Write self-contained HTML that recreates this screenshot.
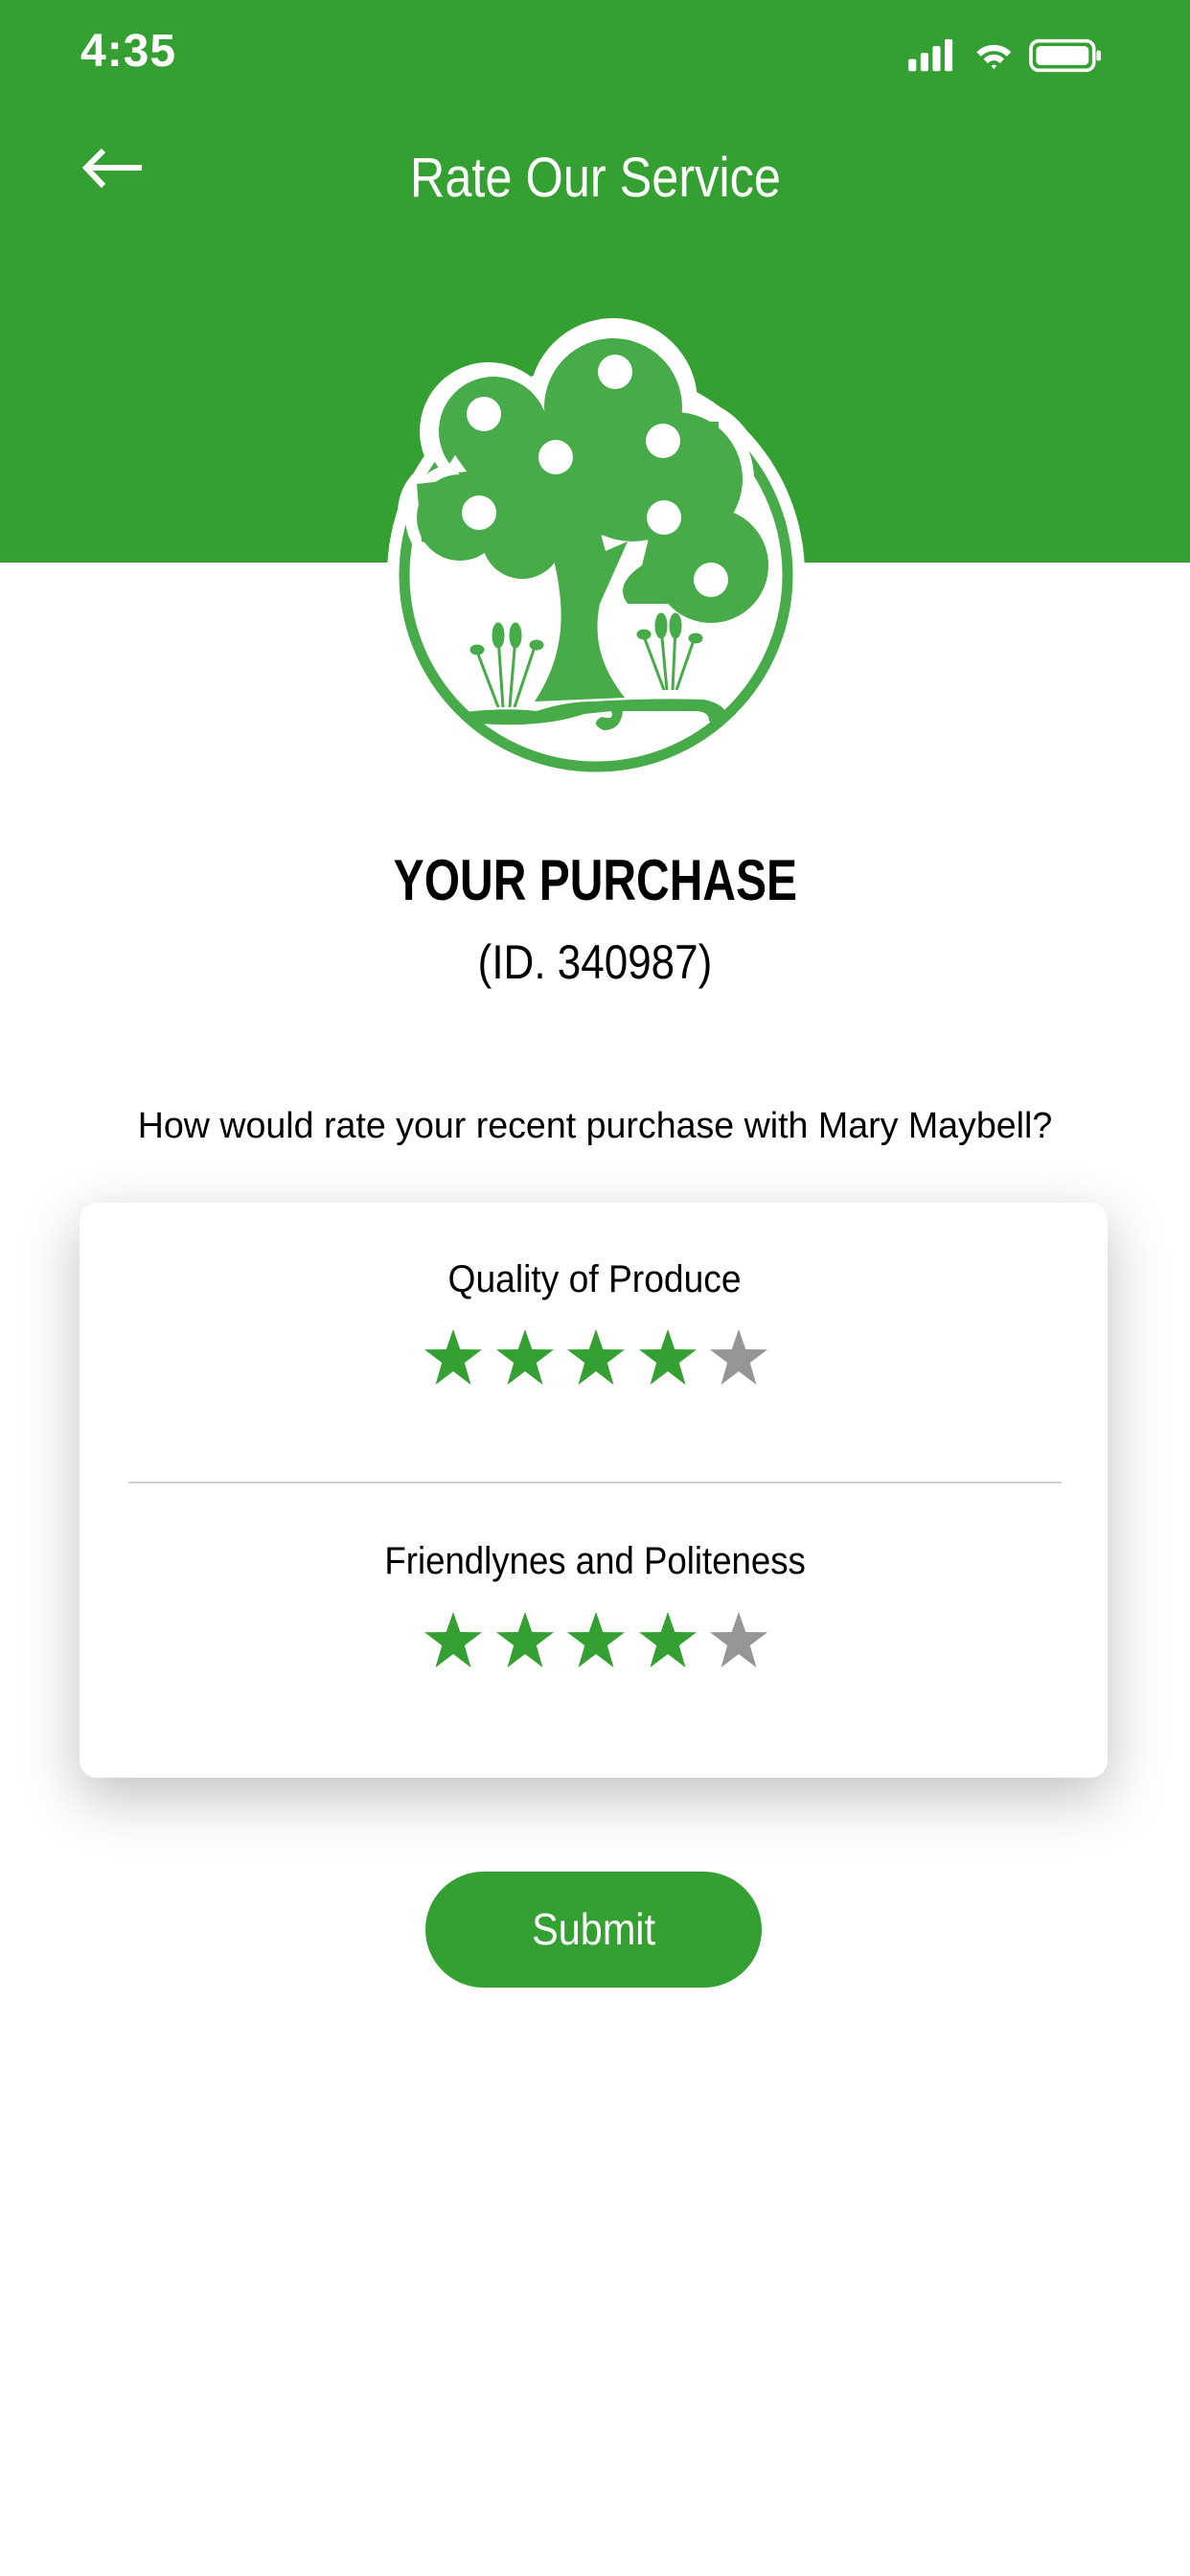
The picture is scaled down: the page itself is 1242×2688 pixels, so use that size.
<!DOCTYPE html>
<html><head><meta charset="utf-8"><style>
*{margin:0;padding:0;box-sizing:border-box}
body{width:1242px;height:2688px;background:#fff;position:relative;overflow:hidden;font-family:"Liberation Sans",sans-serif}
.hdr{position:absolute;left:0;top:0;width:1242px;height:587px;background:#34a032}
.t{position:absolute;white-space:nowrap;text-align:center}
.t span{display:inline-block}
</style></head><body>
<div class="hdr"></div>
<div class="t" style="left:84px;top:26px;font-size:48px;font-weight:bold;color:#fff;letter-spacing:1px">4:35</div>
<svg style="position:absolute;left:938px;top:40px" width="222" height="36" viewBox="0 0 230 40">
<g fill="#fff"><rect x="3" y="24" width="9" height="14" rx="2"/><rect x="17" y="17" width="9" height="21" rx="2"/><rect x="31" y="9" width="9" height="29" rx="2"/><rect x="45" y="1" width="9" height="37" rx="2"/></g>
<path d="M82 16 A28 28 0 0 1 122 16 L117 21 A21 21 0 0 0 87 21Z M90 24 A16 16 0 0 1 114 24 L109 29 A9 9 0 0 0 95 29Z M99 32 L102 36 L105 32 A4 4 0 0 0 99 32Z" fill="#fff"/>
<rect x="145" y="3" width="73" height="34" rx="9" fill="none" stroke="#fff" stroke-width="4"/>
<rect x="151" y="9" width="61" height="22" rx="5" fill="#fff"/>
<rect x="221" y="14" width="5" height="12" rx="2" fill="#fff"/>
</svg>
<svg style="position:absolute;left:84px;top:154px" width="66" height="44" viewBox="0 0 66 44"><path d="M64 21 H8 M24 3 L6 21 L24 40" fill="none" stroke="#fff" stroke-width="6"/></svg>
<div class="t" style="left:0;width:1242px;top:152px;font-size:58px;color:#fff"><span style="transform:scaleX(0.87)">Rate Our Service</span></div>

<svg style="position:absolute;left:380px;top:300px" width="480" height="520" viewBox="0 0 480 520">
<g fill="#fff">
<circle cx="242" cy="300" r="218"/>
<circle cx="260" cy="120" r="88"/><circle cx="130" cy="150" r="72"/><circle cx="330" cy="200" r="86"/><circle cx="365" cy="290" r="75"/><circle cx="95" cy="235" r="60"/>
</g>
<circle cx="242" cy="300" r="200" fill="#fff" stroke="#46ab48" stroke-width="11"/>
<g fill="#fff"><circle cx="260" cy="125" r="84"/><circle cx="135" cy="150" r="69"/><circle cx="325" cy="200" r="82"/><circle cx="362" cy="290" r="72"/><circle cx="100" cy="240" r="57"/></g>
<g fill="#46ab48">
<circle cx="260" cy="125" r="72"/><circle cx="135" cy="150" r="57"/><circle cx="325" cy="200" r="70"/><circle cx="362" cy="290" r="60"/><circle cx="100" cy="240" r="45"/><circle cx="165" cy="262" r="42"/>
<circle cx="210" cy="200" r="70"/><circle cx="280" cy="190" r="75"/>
<rect x="100" y="140" width="270" height="110"/>
<path d="M55 205 L100 200 L105 280 L60 265Z"/>
<path d="M300 250 L410 260 L390 330 L275 330 Q260 310 290 290Z"/>
<path d="M178 432 C212 380 212 330 192 262 L178 248 L210 270 L232 205 L252 275 L275 265 L246 330 C238 370 250 400 272 428Z"/>
<path d="M105 443 Q150 438 180 442 Q210 432 240 432 Q300 428 355 430 Q382 436 378 452 Q370 465 360 452 Q360 442 345 442 L270 442 Q268 462 250 462 Q235 455 248 448 Q262 452 258 442 L230 445 Q185 460 120 455Z"/>
</g>
<g stroke="#46ab48" stroke-width="3" fill="#46ab48">
<line x1="140" y1="438" x2="118" y2="380"/><line x1="145" y1="438" x2="140" y2="365"/><line x1="152" y1="438" x2="158" y2="365"/><line x1="157" y1="438" x2="178" y2="375"/>
<ellipse cx="140" cy="363" rx="5" ry="12"/><ellipse cx="158" cy="363" rx="5" ry="12"/><ellipse cx="118" cy="378" rx="6" ry="4"/><ellipse cx="180" cy="373" rx="6" ry="4"/>
<line x1="313" y1="420" x2="292" y2="364"/><line x1="316" y1="420" x2="310" y2="355"/><line x1="322" y1="420" x2="325" y2="355"/><line x1="326" y1="420" x2="344" y2="368"/>
<ellipse cx="310" cy="353" rx="5" ry="12"/><ellipse cx="325" cy="353" rx="5" ry="12"/><ellipse cx="292" cy="362" rx="6" ry="4"/><ellipse cx="346" cy="366" rx="6" ry="4"/>
</g>
<g fill="#fff"><circle cx="125" cy="132" r="18"/><circle cx="262" cy="88" r="18"/><circle cx="200" cy="177" r="18"/><circle cx="312" cy="160" r="18"/><circle cx="120" cy="235" r="18"/><circle cx="313" cy="240" r="18"/><circle cx="362" cy="305" r="18"/>
<path d="M82 195 L95 175 L107 192Z"/></g>
</svg>

<div class="t" style="left:0;width:1242px;top:884px;font-size:60px;font-weight:bold;color:#000"><span style="transform:scaleX(0.8)">YOUR PURCHASE</span></div>
<div class="t" style="left:0;width:1242px;top:975px;font-size:50px;color:#000"><span style="transform:scaleX(0.88)">(ID. 340987)</span></div>
<div class="t" style="left:0;width:1242px;top:1153px;font-size:37.6px;color:#000">How would rate your recent purchase with Mary Maybell?</div>

<div style="position:absolute;left:83px;top:1255px;width:1073px;height:600px;background:#fff;border-radius:18px;box-shadow:0 20px 60px rgba(0,0,0,0.25)"></div>
<div class="t" style="left:0;width:1242px;top:1313px;font-size:40px;color:#000"><span style="transform:scaleX(0.93)">Quality of Produce</span></div>
<div style="position:absolute;left:134px;top:1546px;width:974px;height:2px;background:#cfcfcf"></div>
<div class="t" style="left:0;width:1242px;top:1607px;font-size:40px;color:#000"><span style="transform:scaleX(0.915)">Friendlynes and Politeness</span></div>
<svg style="position:absolute;left:0;top:0" width="1242" height="1800" viewBox="0 0 1242 1800">
<defs><path id="s" d="M0,-31 L7.3,-10 L30,-9.7 L11.8,4 L18.5,27 L0,13 L-18.5,27 L-11.8,4 L-30,-9.7 L-7.3,-10Z"/></defs>
<g fill="#34a032">
<use href="#s" x="473" y="1418"/><use href="#s" x="548" y="1418"/><use href="#s" x="622" y="1418"/><use href="#s" x="697" y="1418"/>
<use href="#s" x="473" y="1713"/><use href="#s" x="548" y="1713"/><use href="#s" x="622" y="1713"/><use href="#s" x="697" y="1713"/>
</g>
<g fill="#959595"><use href="#s" x="771" y="1418"/><use href="#s" x="771" y="1713"/></g>
</svg>

<div class="t" style="left:444px;top:1953px;width:351px;height:121px;line-height:121px;border-radius:61px;background:#34a032;color:#fff;font-size:46px"><span style="transform:scaleX(0.9)">Submit</span></div>
</body></html>
